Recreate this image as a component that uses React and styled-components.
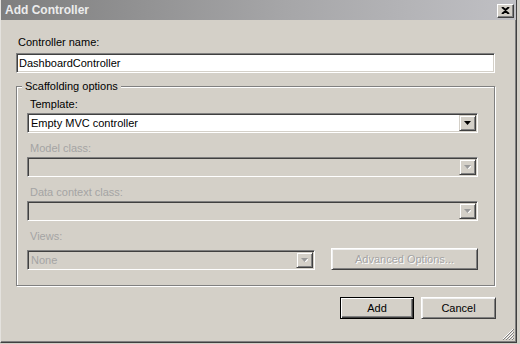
import React from 'react';
import styled, { createGlobalStyle } from 'styled-components';

const GlobalStyle = createGlobalStyle`
  * { box-sizing: border-box; }
  html, body { margin: 0; padding: 0; background: #d4d0c8; }
  body {
    font-family: "Liberation Sans", Arial, sans-serif;
    font-size: 11px;
    color: #000;
  }
`;

const Window = styled.div`
  position: relative;
  width: 517px;
  height: 343px;
  background: #d4d0c8;
  border-left: 1px solid #e4e2de;
  border-right: 1px solid #404040;
  border-bottom: 1px solid #404040;
  box-shadow: inset -1px -1px 0 #808080;
  display: flex;
  flex-direction: column;
`;

const TitleBar = styled.div`
  height: 20px;
  display: flex;
  align-items: center;
  justify-content: space-between;
  padding: 0 2px 0 4px;
  background: linear-gradient(to right, #7e7e7e, #a6a6a8 55%, #c0c0c4);
`;

const Title = styled.span`
  font-size: 12px;
  font-weight: bold;
  color: #ececec;
`;

const CloseButton = styled.div`
  width: 17px;
  height: 14px;
  margin-top: 1px;
  display: flex;
  align-items: center;
  justify-content: center;
  background: #d4d0c8;
  border-top: 1px solid #fff;
  border-left: 1px solid #fff;
  border-right: 1px solid #404040;
  border-bottom: 1px solid #404040;
  box-shadow: inset -1px -1px 0 #808080;
`;

const Body = styled.div`
  flex: 1;
  display: flex;
  flex-direction: column;
  padding: 16px 21px 0 15px;
`;

const Label = styled.div`
  height: 13px;
  line-height: 13px;
  padding-left: ${({ indent }) => indent || 1}px;
  margin-bottom: ${({ gap }) => gap || 2}px;
  color: ${({ disabled }) => (disabled ? '#a4a4a4' : '#000')};
`;

const TextBox = styled.div`
  height: 20px;
  line-height: 16px;
  padding: 1px 0 0 2px;
  background: #fff;
  border-top: 1px solid #808080;
  border-left: 1px solid #808080;
  border-right: 1px solid #fff;
  border-bottom: 1px solid #fff;
  box-shadow: inset 1px 1px 0 #404040, inset -1px -1px 0 #d4d0c8;
`;

const GroupBox = styled.div`
  position: relative;
  margin-top: 13px;
  height: 200px;
  border: 1px solid #808080;
  box-shadow: 1px 1px 0 #fff, inset 1px 1px 0 #fff;
  padding: 11px 16px 0 10px;
  display: flex;
  flex-direction: column;
`;

const Legend = styled.span`
  position: absolute;
  top: -7px;
  left: 5px;
  padding: 0 3px;
  line-height: 13px;
  background: #d4d0c8;
`;

const Field = styled.div`
  display: flex;
  flex-direction: column;
  margin-bottom: 9px;
`;

const Combo = styled.div`
  height: 20px;
  width: ${({ width }) => (width ? `${width}px` : '100%')};
  display: flex;
  align-items: center;
  justify-content: space-between;
  padding: 0 1px 0 3px;
  background: ${({ disabled }) => (disabled ? '#d4d0c8' : '#fff')};
  color: ${({ disabled }) => (disabled ? '#a4a4a4' : '#000')};
  border-top: 1px solid #808080;
  border-left: 1px solid #808080;
  border-right: 1px solid #fff;
  border-bottom: 1px solid #fff;
  box-shadow: inset 1px 1px 0 #404040, inset -1px -1px 0 #d4d0c8;
`;

const DropButton = styled.div`
  width: 17px;
  height: 16px;
  flex: none;
  display: flex;
  align-items: center;
  justify-content: center;
  background: #d4d0c8;
  border-top: 1px solid #d4d0c8;
  border-left: 1px solid #d4d0c8;
  border-right: 1px solid #404040;
  border-bottom: 1px solid #404040;
  box-shadow: inset 1px 1px 0 #fff, inset -1px -1px 0 #808080;
`;

const ViewsRow = styled.div`
  display: flex;
  align-items: flex-end;
  gap: 16px;
  margin-top: 1px;
`;

const Button = styled.div`
  width: ${({ width }) => width || 74}px;
  height: 22px;
  flex: ${({ grow }) => (grow ? 1 : 'none')};
  display: flex;
  align-items: center;
  justify-content: center;
  background: #d4d0c8;
  color: ${({ disabled }) => (disabled ? '#a4a4a4' : '#000')};
  text-shadow: ${({ disabled }) => (disabled ? '1px 1px 0 #fff' : 'none')};
  border: 1px solid;
  border-color: ${({ primary }) => (primary ? '#000' : '#fff #404040 #404040 #fff')};
  box-shadow: ${({ primary }) =>
    primary
      ? 'inset 1px 1px 0 #fff, inset -1px -1px 0 #404040, inset -2px -2px 0 #808080'
      : 'inset 1px 1px 0 #f0f0f0, inset -1px -1px 0 #808080'};
`;

const ButtonRow = styled.div`
  display: flex;
  justify-content: flex-end;
  gap: 7px;
  margin-top: 11px;
  margin-right: -1px;
`;

const Grip = styled.svg`
  position: absolute;
  right: 2px;
  bottom: 2px;
`;

const Arrow = ({ disabled }) => (
  <svg width="7" height="4" viewBox="0 0 7 4">
    {disabled && <path d="M1 1h7l-3.5 3.5z" fill="#fff" />}
    <path d="M0 0h7L3.5 4z" fill={disabled ? '#9a9a9a' : '#000'} />
  </svg>
);

const ComboBox = ({ value, disabled, width }) => (
  <Combo disabled={disabled} width={width}>
    <span>{value}</span>
    <DropButton>
      <Arrow disabled={disabled} />
    </DropButton>
  </Combo>
);

export default function App() {
  return (
    <>
      <GlobalStyle />
      <Window>
        <TitleBar>
          <Title>Add Controller</Title>
          <CloseButton>
            <svg width="9" height="7" viewBox="0 0 9 7">
              <path d="M1 0l3.5 3L8 0M1 7l3.5-3L8 7" stroke="#000" strokeWidth="2" fill="none" />
            </svg>
          </CloseButton>
        </TitleBar>
        <Body>
          <Label gap={4} indent={2}>Controller name:</Label>
          <TextBox>DashboardController</TextBox>
          <GroupBox>
            <Legend>Scaffolding options</Legend>
            <Field>
              <Label indent={3}>Template:</Label>
              <ComboBox value="Empty MVC controller" />
            </Field>
            <Field>
              <Label indent={3} disabled>Model class:</Label>
              <ComboBox disabled />
            </Field>
            <Field>
              <Label indent={3} disabled>Data context class:</Label>
              <ComboBox disabled />
            </Field>
            <Field>
              <Label indent={3} disabled gap={4}>Views:</Label>
              <ViewsRow>
                <ComboBox value="None" disabled width={288} />
                <Button disabled grow>Advanced Options...</Button>
              </ViewsRow>
            </Field>
          </GroupBox>
          <ButtonRow>
            <Button primary>Add</Button>
            <Button width={75}>Cancel</Button>
          </ButtonRow>
        </Body>
        <Grip width="12" height="12" viewBox="0 0 12 12">
          <path d="M11 1L1 11M11 4L4 11M11 7L7 11M11 10L10 11" stroke="#fff" strokeWidth="1" />
          <path d="M12 1L1 12M12 4L4 12M12 7L7 12M12 10L10 12" stroke="#808080" strokeWidth="1" />
        </Grip>
      </Window>
    </>
  );
}
